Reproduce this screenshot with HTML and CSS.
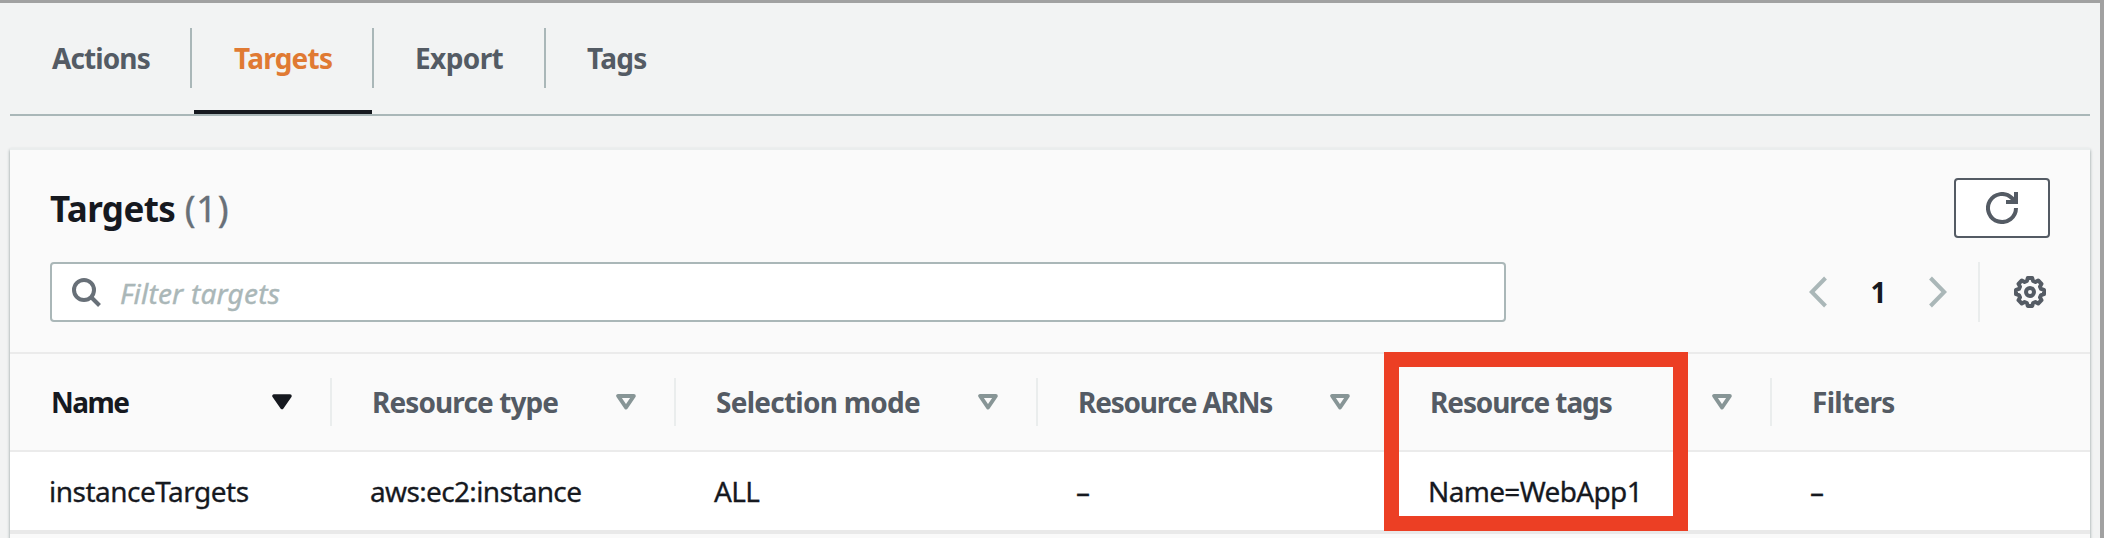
FILE: index.html
```html
<!DOCTYPE html>
<html lang="en">
<head>
<meta charset="utf-8">
<title>Targets</title>
<link rel="stylesheet" href="styles.css">
</head>
<body>
<main class="page">
  <nav class="tabs">
    <a class="tab tab-actions"><span>Actions</span></a>
    <a class="tab tab-targets active"><span>Targets</span></a>
    <a class="tab tab-export"><span>Export</span></a>
    <a class="tab tab-tags"><span>Tags</span></a>
  </nav>
  <section class="panel">
    <header class="panel-head">
      <h2 class="title">Targets <span class="count">(1)</span></h2>
      <button class="refresh" aria-label="Refresh">
        <svg width="32" height="32" viewBox="0 0 32 32" fill="none" stroke="#545b64" stroke-width="4"><path d="M30 16a14 14 0 1 1-4.2-10L30 10.2M30 0v10H20"/></svg>
      </button>
    </header>
    <div class="tools">
      <div class="search">
        <svg width="30" height="30" viewBox="0 0 30 30" fill="none" stroke="#687078" stroke-width="4"><circle cx="12" cy="12" r="10"/><path d="M19 19l8.500 8.500"/></svg>
        <span class="placeholder">Filter targets</span>
      </div>
      <div class="pager">
        <svg class="prev" width="18" height="32" viewBox="0 0 18 32" fill="none" stroke="#aab7b8" stroke-width="4"><path d="M16.500 2L2.800 16l13.700 14"/></svg>
        <span class="page-number">1</span>
        <svg class="next" width="18" height="32" viewBox="0 0 18 32" fill="none" stroke="#aab7b8" stroke-width="4"><path d="M1.500 2l13.700 14L1.500 30"/></svg>
        <span class="rule"></span>
        <svg width="32" height="32" viewBox="0 0 32 32" fill="none" stroke="#545b64" stroke-width="4" stroke-linejoin="round"><path d="M13.800 2h4.400l.9 3 2.300 1 2.800-1.500 3.300 3.300L26 10.600l1 2.300 3 .9v4.400l-3 .9-1 2.300 1.500 2.800-3.300 3.300-2.800-1.500-2.300 1-.9 3h-4.400l-.9-3-2.300-1-2.800 1.500-3.300-3.300L6 21.400l-1-2.300-3-.9v-4.400l3-.9 1-2.300-1.500-2.800 3.300-3.300L10.600 6l2.300-1z"/><circle cx="16" cy="16" r="4"/></svg>
      </div>
    </div>
    <div class="table">
      <div class="row head">
        <div class="cell sorted"><span>Name</span><svg class="sort" width="20" height="16" viewBox="0 0 20 16"><path d="M2 2h16l-8 11.500z" fill="#16191f" stroke="#16191f" stroke-width="3.500" stroke-linejoin="round"/></svg></div>
        <div class="cell"><span>Resource type</span><svg class="sort" width="20" height="16" viewBox="0 0 20 16"><path d="M2.200 2h15.600L10 13.500z"/></svg></div>
        <div class="cell mode"><span>Selection mode</span><svg class="sort" width="20" height="16" viewBox="0 0 20 16"><path d="M2.200 2h15.600L10 13.500z"/></svg></div>
        <div class="cell arns"><span>Resource ARNs</span><svg class="sort" width="20" height="16" viewBox="0 0 20 16"><path d="M2.200 2h15.600L10 13.500z"/></svg></div>
        <div class="cell resource-tags"><span>Resource tags</span><svg class="sort" width="20" height="16" viewBox="0 0 20 16"><path d="M2.200 2h15.600L10 13.500z"/></svg></div>
        <div class="cell filters"><span>Filters</span></div>
      </div>
      <div class="row body">
        <div class="cell"><span>instanceTargets</span></div>
        <div class="cell"><span>aws:ec2:instance</span></div>
        <div class="cell"><span>ALL</span></div>
        <div class="cell"><span>–</span></div>
        <div class="cell"><span>Name=WebApp1</span></div>
        <div class="cell"><span>–</span></div>
      </div>
      <div class="highlight"></div>
    </div>
  </section>
</main>
</body>
</html>
```
FILE: styles.css
```css
* { box-sizing: border-box; }
body { margin: 0; background: #f2f3f3; }
svg { display: block; flex: none; }
.page {
  height: 538px;
  overflow: hidden;
  padding: 0 10px;
  border-top: 3px solid #a1a1a1;
  border-right: 4px solid #a1a1a1;
  font: 28px/40px "Noto Sans", "Open Sans", sans-serif;
  letter-spacing: -0.9px;
  color: #16191f;
  white-space: nowrap;
}
.tabs {
  display: flex;
  height: 113px;
  border-bottom: 2px solid #aab7b8;
  font-weight: 700;
  color: #545b64;
}
.tab {
  display: flex;
  height: 111px;
  padding: 35px 0 0 42px;
  background: linear-gradient(#aab7b8, #aab7b8) right 25px / 2px 60px no-repeat;
}
.tab-actions { width: 182px; }
.tab-targets { width: 182px; letter-spacing: -0.75px; }
.tab-export { width: 172px; padding-left: 41px; letter-spacing: -0.6px; }
.tab-tags { background: none; letter-spacing: -0.7px; padding-left: 41px; }
.tab.active {
  color: #e07a33;
  background: linear-gradient(#aab7b8, #aab7b8) right 25px / 2px 60px no-repeat,
    linear-gradient(#16191f, #16191f) 2px 107px / 178px 4px no-repeat;
}
.panel {
  height: 400px;
  margin: 32px 0 0;
  background: #fafafa;
  border-top: 2px solid #eaeded;
  box-shadow: 0 2px 3px 0 #879596;
}
.panel-head {
  display: flex;
  justify-content: space-between;
  padding: 28px 40px 0;
  height: 112px;
}
.title {
  margin: 6px 0 0;
  font-size: 35px;
  line-height: 50px;
  font-weight: 700;
  letter-spacing: -0.6px;
}
.count { margin-left: 1px; font-size: 36px; font-weight: 400; letter-spacing: 0.8px; color: #687078; -webkit-text-stroke: 0.4px #687078; }
.refresh {
  display: flex;
  width: 96px;
  height: 60px;
  padding: 12px 30px;
  background: #fff;
  border: 2px solid #545b64;
  border-radius: 4px;
}
.tools {
  display: flex;
  justify-content: space-between;
  padding: 0 44px 0 40px;
  height: 90px;
}
.search {
  display: flex;
  width: 1456px;
  height: 60px;
  padding: 14px 20px;
  background: #fff;
  border: 2px solid #aab7b8;
  border-radius: 4px;
}
.placeholder {
  margin: -5px 0 0 18px;
  font-style: italic;
  letter-spacing: 0.2px;
  color: #aab7b8;
  -webkit-text-stroke: 0.4px #aab7b8;
}
.pager { display: flex; align-items: center; height: 60px; }
.page-number { width: 102px; text-align: center; font-weight: 700; }
.rule { width: 2px; height: 60px; margin: 0 34px 0 31px; background: #eaeded; }
.table { position: relative; }
.row {
  display: grid;
  grid-template-columns: 322px 344px 362px 352px 382px 1fr;
  border-top: 2px solid #ebebeb;
}
.cell { display: flex; }
.head { height: 98px; font-weight: 700; color: #545b64; }
.head .cell {
  justify-content: space-between;
  padding: 28px 40px 0;
  background: linear-gradient(#eaeded, #eaeded) right 24px / 2px 48px no-repeat;
}
.head .cell:first-child { padding-left: 41px; letter-spacing: -1.5px; }
.head .cell:last-child { background: none; }
.head .mode { letter-spacing: -0.75px; }
.head .arns { letter-spacing: -1.2px; }
.head .resource-tags { letter-spacing: -1.1px; }
.head .filters { letter-spacing: -0.7px; }
.head .sorted { color: #16191f; }
.sort { margin-top: 12px; fill: none; stroke: #879596; stroke-width: 4; stroke-linejoin: round; }
.body { height: 84px; background: #fff; border-bottom: 4px solid #e9e9e9; letter-spacing: -0.65px; -webkit-text-stroke: 0.3px #16191f; }
.body .cell { padding: 19px 0 0 38px; }
.body .cell:first-child { padding-left: 39px; letter-spacing: -0.5px; }
.highlight {
  position: absolute;
  left: 1374px;
  top: 0;
  width: 304px;
  height: 179px;
  border: 15px solid #ec3f24;
}
```
